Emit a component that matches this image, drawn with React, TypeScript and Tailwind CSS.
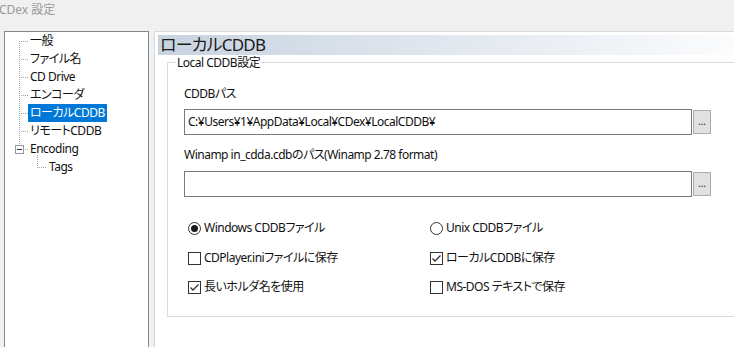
import React from "react";

function TreeLines() {
  const dots: JSX.Element[] = [];
  const v = (x: number, y1: number, y2: number, key: string) => {
    for (let y = y1; y <= y2; y += 2) dots.push(<rect key={key + y} x={x} y={y} width={1} height={1} fill="#a0a0a0" />);
  };
  const h = (y: number, x1: number, x2: number, key: string) => {
    for (let x = x1; x <= x2; x += 2) dots.push(<rect key={key + x} x={x} y={y} width={1} height={1} fill="#a0a0a0" />);
  };
  v(14, 9, 114, "v");
  [9, 27, 45, 63, 81, 99].forEach((y, i) => h(y, 14, 22, "h" + i));
  h(117, 20, 22, "he");
  v(32, 123, 135, "vt");
  h(135, 32, 40, "ht");
  return (
    <svg className="absolute left-0 top-0" width="145" height="320">
      {dots}
      <rect x={10.5} y={113.5} width={8} height={8} fill="white" stroke="#8f9bab" />
      <rect x={12} y={117} width={5} height={1} fill="#333" />
    </svg>
  );
}

function Radio({ on }: { on?: boolean }) {
  return (
    <svg width="13" height="13" className="shrink-0">
      <circle cx="6.5" cy="6.5" r="6" fill="white" stroke="#333" />
      {on && <circle cx="6.5" cy="6.5" r="3.5" fill="#1a1a1a" />}
    </svg>
  );
}

function Check({ on }: { on?: boolean }) {
  return (
    <svg width="13" height="13" className="shrink-0">
      <rect x="0.5" y="0.5" width="12" height="12" fill="white" stroke="#333" />
      {on && <path d="M2.5 6.5 L5 9 L10.5 3.5" fill="none" stroke="#333" strokeWidth="1.3" />}
    </svg>
  );
}

function Opt({ children, ctl }: { children: React.ReactNode; ctl: React.ReactNode }) {
  return (
    <div className="flex items-center h-[16px] gap-[3px] text-[12px] text-[#111]">
      {ctl}
      <span className="leading-[16px] whitespace-nowrap">{children}</span>
    </div>
  );
}

export default function App() {
  const items = ["一般", "ファイル名", "CD Drive", "エンコーダ", "ローカルCDDB", "リモートCDDB", "Encoding"];
  return (
    <div className="w-[734px] h-[347px] bg-[#f0f0f0] overflow-hidden flex flex-col font-['Noto_Sans','Noto_Sans_CJK_JP',sans-serif] [font-feature-settings:'palt'] tracking-[-0.5px]">
      <div className="h-[31px] shrink-0 pt-[2px] pl-0 ml-[-1px] text-[12px] leading-[16px] text-[#9a9a9a] tracking-normal">CDex 設定</div>
      <div className="flex flex-1 min-h-0">
        <div className="ml-[4px] w-[145px] h-[330px] shrink-0 border border-[#828790] bg-white relative">
          <TreeLines />
          <div className="relative flex flex-col">
            {items.map((t, i) => (
              <div key={t} className="h-[18px] flex items-center">
                <span
                  className={
                    "ml-[23px] px-[2px] text-[12px] leading-[18px] whitespace-nowrap " +
                    (i === 4 ? "bg-[#0078d7] text-white" : "text-[#111]")
                  }
                >
                  {t}
                </span>
              </div>
            ))}
            <div className="h-[18px] flex items-center">
              <span className="ml-[42px] px-[2px] text-[12px] leading-[18px] text-[#111]">Tags</span>
            </div>
          </div>
        </div>
        <div className="ml-[5px] flex-1 bg-white border-l border-t border-[#dadada] pl-[3px] pt-[3px] overflow-hidden">
          <div className="h-[20px] bg-linear-to-r from-[#c8d3e0] to-[#fbfcfd] pl-[2px] text-[17px] leading-[20px] text-[#1a1a1a] tracking-[-0.8px]">
            ローカルCDDB
          </div>
          <div className="mt-[7px] ml-[9px] w-[700px] h-[255px] border border-[#dcdcdc] relative">
            <span className="absolute left-[8px] top-[-6px] bg-white px-[1px] text-[12px] leading-[12px] text-[#111]">
              Local CDDB設定
            </span>
            <div className="pl-[16px]">
              <div className="mt-[23px] h-[16px] text-[12px] leading-[16px] text-[#111]">CDDBパス</div>
              <div className="mt-[7px] flex items-start">
                <div className="w-[508px] h-[26px] border border-[#7a7a7a] bg-white pl-[3px] text-[12px] leading-[24px] text-[#111]">
                  C:¥Users¥1¥AppData¥Local¥CDex¥LocalCDDB¥
                </div>
                <div className="ml-[1px] mt-[1px] w-[18px] h-[24px] border border-[#adadad] bg-[#e1e1e1] text-[10px] leading-[20px] text-center text-[#222] tracking-normal">
                  ...
                </div>
              </div>
              <div className="mt-[12px] h-[16px] text-[12px] leading-[16px] text-[#111]">
                Winamp in_cdda.cdbのパス(Winamp 2.78 format)
              </div>
              <div className="mt-[8px] flex items-start">
                <div className="w-[508px] h-[26px] border border-[#7a7a7a] bg-white" />
                <div className="ml-[1px] mt-[1px] w-[18px] h-[24px] border border-[#adadad] bg-[#e1e1e1] text-[10px] leading-[20px] text-center text-[#222] tracking-normal">
                  ...
                </div>
              </div>
              <div className="pl-[4px] mt-[23px] grid grid-cols-[242px_200px] gap-y-[14px]">
                <Opt ctl={<Radio on />}>Windows CDDBファイル</Opt>
                <Opt ctl={<Radio />}>Unix CDDBファイル</Opt>
                <Opt ctl={<Check />}>CDPlayer.iniファイルに保存</Opt>
                <Opt ctl={<Check on />}>ローカルCDDBに保存</Opt>
                <div className="-mt-[1px]">
                  <Opt ctl={<Check on />}>長いホルダ名を使用</Opt>
                </div>
                <div className="-mt-[1px]">
                  <Opt ctl={<Check />}>MS-DOS テキストで保存</Opt>
                </div>
              </div>
            </div>
          </div>
        </div>
      </div>
    </div>
  );
}
